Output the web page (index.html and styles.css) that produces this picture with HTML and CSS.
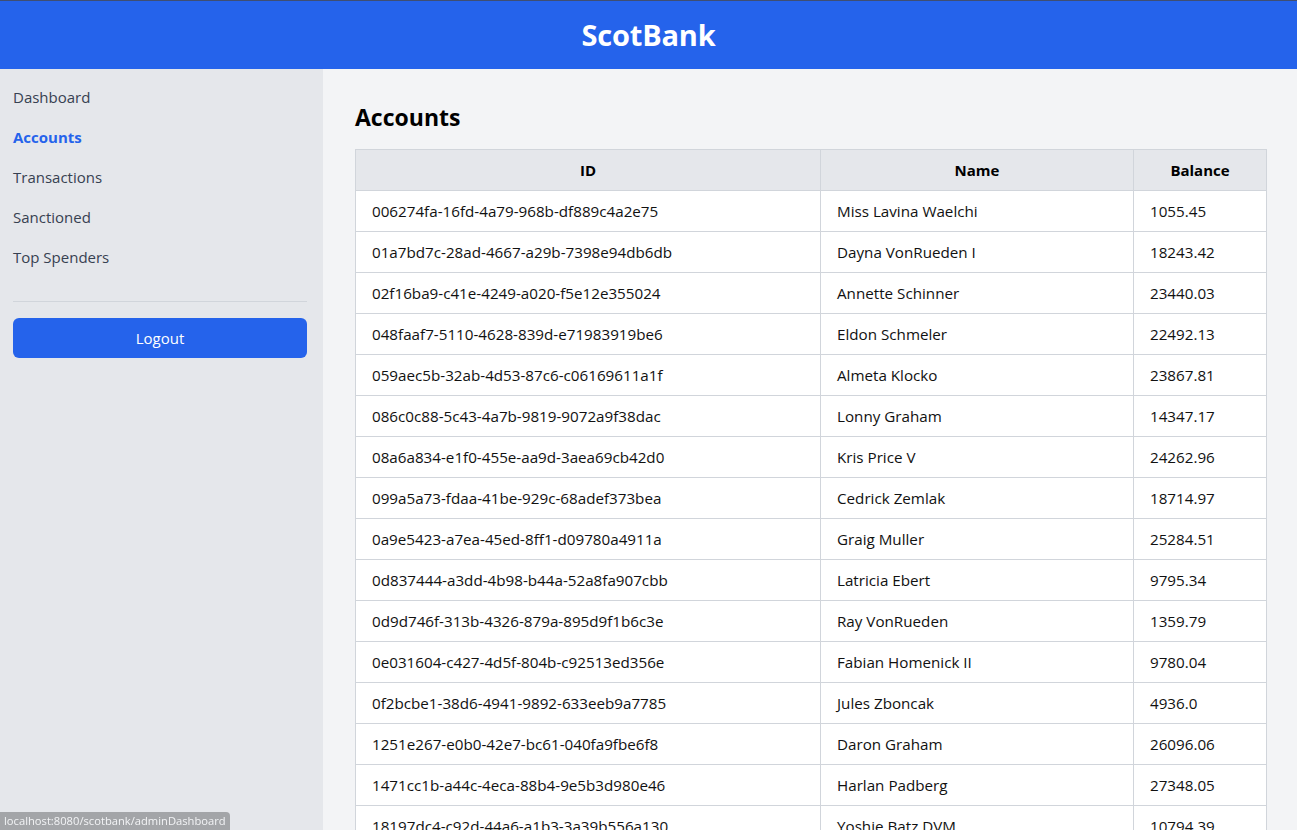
FILE: index.html
```html
<!DOCTYPE html>
<html lang="en">
<head>
<meta charset="utf-8">
<title>ScotBank - Accounts</title>
<link rel="stylesheet" href="styles.css">
</head>
<body>
<header class="topbar">
  <h1 class="brand">ScotBank</h1>
</header>
<div class="layout">
  <aside class="sidebar">
    <nav class="nav">
      <a class="nav-link" href="#">Dashboard</a>
      <a class="nav-link active" href="#">Accounts</a>
      <a class="nav-link" href="#">Transactions</a>
      <a class="nav-link" href="#">Sanctioned</a>
      <a class="nav-link" href="#">Top Spenders</a>
    </nav>
    <hr class="divider">
    <button class="logout">Logout</button>
  </aside>
  <main class="content">
    <h2 class="page-title">Accounts</h2>
    <table class="accounts">
      <colgroup>
        <col class="col-id">
        <col class="col-name">
        <col class="col-balance">
      </colgroup>
      <thead>
        <tr><th>ID</th><th>Name</th><th>Balance</th></tr>
      </thead>
      <tbody>
        <tr><td>006274fa-16fd-4a79-968b-df889c4a2e75</td><td>Miss Lavina Waelchi</td><td>1055.45</td></tr>
        <tr><td>01a7bd7c-28ad-4667-a29b-7398e94db6db</td><td>Dayna VonRueden I</td><td>18243.42</td></tr>
        <tr><td>02f16ba9-c41e-4249-a020-f5e12e355024</td><td>Annette Schinner</td><td>23440.03</td></tr>
        <tr><td>048faaf7-5110-4628-839d-e71983919be6</td><td>Eldon Schmeler</td><td>22492.13</td></tr>
        <tr><td>059aec5b-32ab-4d53-87c6-c06169611a1f</td><td>Almeta Klocko</td><td>23867.81</td></tr>
        <tr><td>086c0c88-5c43-4a7b-9819-9072a9f38dac</td><td>Lonny Graham</td><td>14347.17</td></tr>
        <tr><td>08a6a834-e1f0-455e-aa9d-3aea69cb42d0</td><td>Kris Price V</td><td>24262.96</td></tr>
        <tr><td>099a5a73-fdaa-41be-929c-68adef373bea</td><td>Cedrick Zemlak</td><td>18714.97</td></tr>
        <tr><td>0a9e5423-a7ea-45ed-8ff1-d09780a4911a</td><td>Graig Muller</td><td>25284.51</td></tr>
        <tr><td>0d837444-a3dd-4b98-b44a-52a8fa907cbb</td><td>Latricia Ebert</td><td>9795.34</td></tr>
        <tr><td>0d9d746f-313b-4326-879a-895d9f1b6c3e</td><td>Ray VonRueden</td><td>1359.79</td></tr>
        <tr><td>0e031604-c427-4d5f-804b-c92513ed356e</td><td>Fabian Homenick II</td><td>9780.04</td></tr>
        <tr><td>0f2bcbe1-38d6-4941-9892-633eeb9a7785</td><td>Jules Zboncak</td><td>4936.0</td></tr>
        <tr><td>1251e267-e0b0-42e7-bc61-040fa9fbe6f8</td><td>Daron Graham</td><td>26096.06</td></tr>
        <tr><td>1471cc1b-a44c-4eca-88b4-9e5b3d980e46</td><td>Harlan Padberg</td><td>27348.05</td></tr>
        <tr><td>18197dc4-c92d-44a6-a1b3-3a39b556a130</td><td>Yoshie Batz DVM</td><td>10794.39</td></tr>
      </tbody>
    </table>
  </main>
</div>
<div class="status-url">localhost:8080/scotbank/adminDashboard</div>
</body>
</html>
```
FILE: styles.css
```css
* { box-sizing: border-box; }

html, body {
  margin: 0;
  padding: 0;
}

body {
  font-family: "Open Sans", "Noto Sans", "Liberation Sans", sans-serif;
  font-size: 16px;
  line-height: 24px;
  color: #111827;
  background: #f3f4f6;
}

.topbar {
  height: 69px;
  background: #2563eb;
  border-top: 1px solid #3f4e72;
  display: flex;
  align-items: center;
  justify-content: center;
}

.brand {
  margin: 0;
  color: #ffffff;
  font-size: 29px;
  line-height: 36px;
  font-weight: 700;
  letter-spacing: -0.2px;
}

.layout {
  display: flex;
  align-items: stretch;
  min-height: calc(100vh - 69px);
}

.sidebar {
  width: 323px;
  flex: 0 0 323px;
  background: #e5e7eb;
  padding: 8px 16px 0 13px;
}

.nav {
  display: flex;
  flex-direction: column;
}

.nav-link {
  display: block;
  padding: 8px 0;
  color: #374151;
  text-decoration: none;
  font-size: 15px;
}

.nav-link.active {
  color: #2563eb;
  font-weight: 700;
}

.divider {
  border: 0;
  border-top: 1px solid #d1d5db;
  margin: 24px 0 16px;
}

.logout {
  display: block;
  width: 100%;
  height: 40px;
  border: 0;
  border-radius: 6px;
  background: #2563eb;
  color: #ffffff;
  font-family: inherit;
  font-size: 15px;
  cursor: pointer;
}

.content {
  flex: 1;
  padding: 32px 30px 32px 32px;
  background: #f3f4f6;
}

.page-title {
  margin: 0 0 16px;
  font-size: 23px;
  line-height: 32px;
  font-weight: 700;
  color: #000000;
}

.accounts {
  width: 100%;
  border-collapse: collapse;
  background: #ffffff;
  border: 1px solid #d1d5db;
  table-layout: fixed;
}

.col-id { width: 465px; }
.col-name { width: 313px; }
.col-balance { width: 133px; }

.accounts th,
.accounts td {
  border: 1px solid #d1d5db;
  padding: 8px 16px;
  font-size: 15px;
  line-height: 24px;
  white-space: nowrap;
  overflow: hidden;
}

.accounts td {
  font-size: 15.2px;
}

.accounts th {
  background: #e5e7eb;
  font-weight: 700;
  text-align: center;
  color: #000000;
}

.accounts td {
  text-align: left;
  color: #111111;
}

.status-url {
  position: fixed;
  left: 0;
  bottom: 0;
  background: #a3a5a8;
  color: #f3f4f6;
  font-size: 11.2px;
  line-height: 18px;
  padding: 0 4px;
  border-top-right-radius: 4px;
}
```
